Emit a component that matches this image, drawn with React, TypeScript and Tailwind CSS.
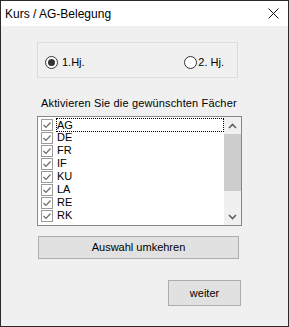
import { useState } from "react";

const faecher = ["AG", "DE", "FR", "IF", "KU", "LA", "RE", "RK"];

const CheckIcon = () => (
  <svg width="12" height="12" viewBox="0 0 12 12" className="shrink-0">
    <rect x="0.5" y="0.5" width="11" height="11" fill="#fff" stroke="#9a9a9a" />
    <path d="M2.5 6 L5 8.5 L9.5 3.5" fill="none" stroke="#6a6a6a" strokeWidth="1.2" />
  </svg>
);

const Radio = ({ checked }: { checked: boolean }) => (
  <span className="w-[13px] h-[13px] rounded-full border border-[#333] bg-white flex items-center justify-center shrink-0">
    {checked && <span className="w-[7px] h-[7px] rounded-full bg-[#333]" />}
  </span>
);

const App = () => {
  const [halbjahr, setHalbjahr] = useState(1);

  return (
    <div
      className="w-[289px] h-[327px] border border-[#2b2b2b] flex flex-col bg-[#f0f0f0] text-black"
      style={{ fontFamily: '"Liberation Sans", Arial, sans-serif' }}
    >
      <div className="h-[25px] bg-white flex items-center justify-between pl-[4px] pr-[9px] shrink-0">
        <span className="text-[12px] leading-none">Kurs / AG-Belegung</span>
        <svg width="11" height="11" viewBox="0 0 11 11">
          <path d="M0.5 0.5 L10.5 10.5 M10.5 0.5 L0.5 10.5" stroke="#111" strokeWidth="1" />
        </svg>
      </div>

      <div className="flex-1 flex flex-col pl-[36px] text-[11px]">
        <div className="mt-[16px] w-[201px] h-[36px] border border-[#dcdcdc] flex items-center justify-between pl-[7px] pr-[13px] pt-[5px]">
          <label className="flex items-center gap-[4px] cursor-pointer" onClick={() => setHalbjahr(1)}>
            <Radio checked={halbjahr === 1} />
            <span>1.Hj.</span>
          </label>
          <label className="flex items-center gap-[1px] cursor-pointer" onClick={() => setHalbjahr(2)}>
            <Radio checked={halbjahr === 2} />
            <span>2. Hj.</span>
          </label>
        </div>

        <div className="mt-[19px] pl-[4px] leading-[13px] tracking-[0.15px]">Aktivieren Sie die gewünschten Fächer</div>

        <div className="mt-[6px] w-[205px] h-[110px] border border-[#828790] bg-white flex">
          <div className="flex-1 flex flex-col pt-[1px] pl-[3px]">
            {faecher.map((f, i) => (
              <div key={f} className="h-[13px] flex items-center gap-[3px]">
                <CheckIcon />
                <span
                  className={
                    i === 0
                      ? "flex-1 h-[14px] border border-dotted border-black leading-[12px]"
                      : "leading-[13px] pl-[1px]"
                  }
                >
                  {f}
                </span>
              </div>
            ))}
          </div>
          <div className="w-[17px] bg-[#f0f0f0] flex flex-col">
            <div className="h-[17px] flex items-center justify-center">
              <svg width="9" height="6" viewBox="0 0 9 6">
                <path d="M1 5 L4.5 1.5 L8 5" fill="none" stroke="#606060" strokeWidth="1.6" />
              </svg>
            </div>
            <div className="h-[57px] bg-[#cdcdcd]" />
            <div className="flex-1" />
            <div className="h-[17px] flex items-center justify-center">
              <svg width="9" height="6" viewBox="0 0 9 6">
                <path d="M1 1 L4.5 4.5 L8 1" fill="none" stroke="#606060" strokeWidth="1.6" />
              </svg>
            </div>
          </div>
        </div>

        <button className="mt-[10px] ml-[1px] w-[201px] h-[23px] bg-[#e1e1e1] border border-[#adadad] text-[11px]">
          Auswahl umkehren
        </button>

        <button className="mt-[21px] ml-[131px] w-[73px] h-[26px] bg-[#e1e1e1] border border-[#adadad] text-[11px]">
          weiter
        </button>
      </div>
    </div>
  );
};

export default App;
